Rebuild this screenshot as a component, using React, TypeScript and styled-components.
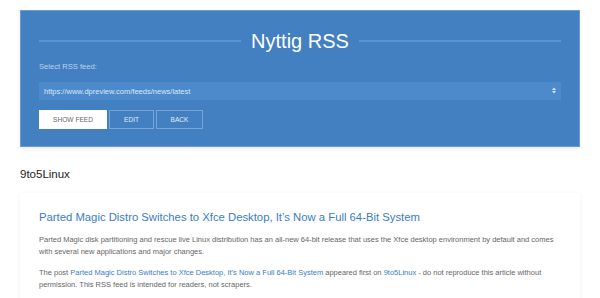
import React from "react"
import { styled, createGlobalStyle } from "styled-components"

const GlobalStyle = createGlobalStyle`
   html, body {
      margin: 0;
      padding: 0;
      background: #ffffff;
      font-family: "Liberation Sans", Arial, sans-serif;
   }
   * {
      box-sizing: border-box;
   }
`

const feeds = [
   "https://www.dpreview.com/feeds/news/latest",
]

type ButtonProps = {
   $primary?: boolean,
   $width: number
}

export default function App() {
   return (
      <>
         <GlobalStyle />
         <StyledPage>
            <StyledHeader>
               <StyledTitleRow>
                  <StyledRule />
                  <StyledTitle>Nyttig RSS</StyledTitle>
                  <StyledRule />
               </StyledTitleRow>
               <StyledLabel htmlFor="feed">Select RSS feed:</StyledLabel>
               <StyledSelectWrap>
                  <StyledSelect id="feed" defaultValue={feeds[0]}>
                     {feeds.map((feed) => (
                        <option key={feed} value={feed}>{feed}</option>
                     ))}
                  </StyledSelect>
                  <StyledArrows>
                     <svg width="4" height="7" viewBox="0 0 4 7">
                        <path d="M0 3 L2 0.5 L4 3 Z M0 4 L2 6.5 L4 4 Z" fill="#d8e6f5" />
                     </svg>
                  </StyledArrows>
               </StyledSelectWrap>
               <StyledButtons>
                  <StyledButton $primary $width={68}>SHOW FEED</StyledButton>
                  <StyledButton $width={45}>EDIT</StyledButton>
                  <StyledButton $width={47}>BACK</StyledButton>
               </StyledButtons>
            </StyledHeader>

            <StyledSource>9to5Linux</StyledSource>

            <StyledCard>
               <StyledCardTitle href="#">
                  Parted Magic Distro Switches to Xfce Desktop, It’s Now a Full 64-Bit System
               </StyledCardTitle>
               <StyledText>
                  Parted Magic disk partitioning and rescue live Linux distribution has an all-new 64-bit release that uses the Xfce desktop environment by default and comes with several new applications and major changes.
               </StyledText>
               <StyledText>
                  The post <StyledLink href="#">Parted Magic Distro Switches to Xfce Desktop, It’s Now a Full 64-Bit System</StyledLink> appeared first on <StyledLink href="#">9to5Linux</StyledLink> - do not reproduce this article without permission. This RSS feed is intended for readers, not scrapers.
               </StyledText>
            </StyledCard>
         </StyledPage>
      </>
   );
}

const StyledPage = styled.div`
   padding: 10px 20px 0;
   width: 600px;
`

const StyledHeader = styled.header`
   display: flex;
   flex-direction: column;
   background: #4280c1;
   border: 1px solid #6b9cd3;
   padding: 17px 18px 17px 18px;
   box-shadow: 0 2px 4px rgba(0, 0, 0, 0.08);
`

const StyledTitleRow = styled.div`
   display: flex;
   align-items: center;
   gap: 10px;
   height: 26px;
`

const StyledRule = styled.div`
   flex: 1;
   height: 2px;
   background: #5a93d0;
`

const StyledTitle = styled.h1`
   margin: 0;
   font-size: 20px;
   font-weight: 400;
   color: #ffffff;
   line-height: 26px;
`

const StyledLabel = styled.label`
   margin-top: 8px;
   font-size: 7.6px;
   line-height: 10px;
   color: #bcd3ee;
`

const StyledSelectWrap = styled.div`
   position: relative;
   margin-top: 10px;
`

const StyledSelect = styled.select`
   appearance: none;
   display: block;
   width: 100%;
   height: 18px;
   border: none;
   border-radius: 0;
   background: #4d8acb;
   color: #dbe8f6;
   font-family: "Liberation Sans", Arial, sans-serif;
   font-size: 7.5px;
   padding: 0 5px;
   outline: none;
`

const StyledArrows = styled.span`
   position: absolute;
   right: 5px;
   top: 5px;
   display: flex;
   pointer-events: none;
`

const StyledButtons = styled.div`
   display: flex;
   gap: 2px;
   margin-top: 10px;
`

const StyledButton = styled.button<ButtonProps>`
   width: ${({ $width }) => $width}px;
   height: 19px;
   padding: 0;
   border: 1px solid ${({ $primary }) => $primary ? "#ffffff" : "#78a5d8"};
   background: ${({ $primary }) => $primary ? "#ffffff" : "transparent"};
   color: ${({ $primary }) => $primary ? "#666666" : "#e3eef9"};
   font-family: "Liberation Sans", Arial, sans-serif;
   font-size: 6.6px;
   cursor: pointer;
`

const StyledSource = styled.h2`
   margin: 20px 0 0;
   font-size: 11.5px;
   line-height: 14px;
   font-weight: 400;
   color: #222222;
`

const StyledCard = styled.article`
   margin-top: 12px;
   background: #ffffff;
   padding: 16px 19px 10px;
   box-shadow: 0 1px 6px rgba(0, 0, 0, 0.06);
`

const StyledCardTitle = styled.a`
   display: block;
   font-size: 11.3px;
   line-height: 16px;
   color: #3a7cc4;
   text-decoration: none;
`

const StyledText = styled.p`
   margin: 9px 0 0;
   font-size: 7.5px;
   line-height: 12px;
   color: #666666;
`

const StyledLink = styled.a`
   color: #3a7cc4;
   text-decoration: none;
`
